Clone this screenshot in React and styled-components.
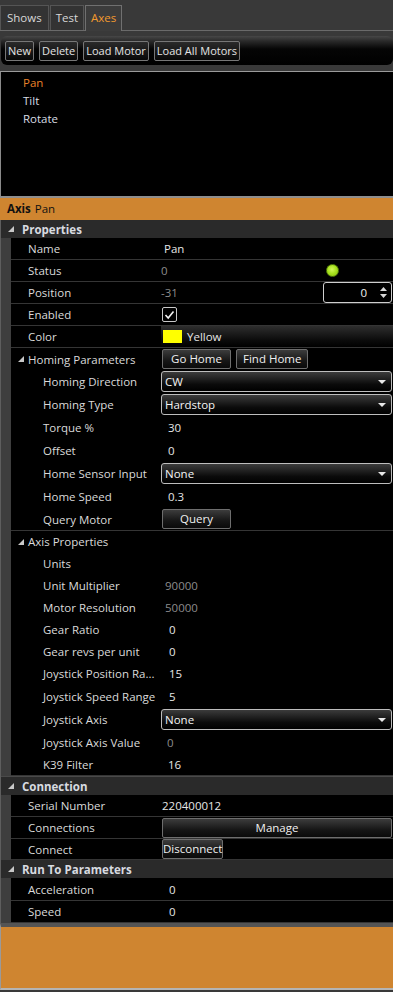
import React from "react";
import styled, { createGlobalStyle } from "styled-components";

const GlobalStyle = createGlobalStyle`
  html, body {
    margin: 0;
    padding: 0;
    background: #3a3a3a;
  }
  body {
    font-family: "Open Sans", "Noto Sans", sans-serif;
    font-size: 11.5px;
    color: #dcdcdc;
  }
`;

const Page = styled.div`
  width: 393px;
  height: 992px;
  display: flex;
  flex-direction: column;
  background: #393939;
  overflow: hidden;
`;

const TabStrip = styled.div`
  display: flex;
  align-items: flex-end;
  height: 31px;
  border-bottom: 1px solid #6a6a6a;
  box-sizing: border-box;
`;

const Tab = styled.div`
  box-sizing: border-box;
  padding: 0 ${(p) => p.$pad || 6}px;
  margin-right: 1px;
  border: 1px solid ${(p) => (p.$active ? "#707070" : "#555")};
  border-bottom: none;
  background: ${(p) => (p.$active ? "#3c3c3c" : "#333")};
  color: ${(p) => (p.$active ? "#f39a2e" : "#d8d8d8")};
  font-size: 11.5px;
  line-height: 24px;
  margin-bottom: ${(p) => (p.$active ? "-1px" : "0")};
  height: ${(p) => (p.$active ? "26px" : "25px")};
`;

const Toolbar = styled.div`
  margin: 5px 0 0 1px;
  height: 29px;
  border-radius: 6px;
  background: linear-gradient(#474747 0px, #2a2a2a 5px, #050505 13px, #000 100%);
  display: flex;
  align-items: center;
  gap: 5px;
  padding: 0 4px;
`;

const ToolButton = styled.button`
  height: 20px;
  padding: 0 2px;
  border: 1px solid #777;
  border-radius: 2px;
  background: linear-gradient(#2a2a2a, #080808);
  color: #e4e4e4;
  font-family: inherit;
  font-size: 11px;
  line-height: 16px;
`;

const AxisList = styled.ul`
  list-style: none;
  margin: 6px 0 0 0;
  padding: 2px 0 0 22px;
  height: 127px;
  box-sizing: border-box;
  background: #000;
  border-top: 1px solid #9a9a9a;
  border-left: 1px solid #8a8a8a;
  border-bottom: 2px solid #8e8e8e;
`;

const AxisItem = styled.li`
  height: 18px;
  line-height: 18px;
  font-size: 11.5px;
  color: ${(p) => (p.$selected ? "#e9822a" : "#d8dde4")};
`;

const AxisHeader = styled.div`
  height: 22px;
  line-height: 22px;
  background: #cf8530;
  color: #111;
  font-size: 11.5px;
  padding-left: 7px;
  b {
    font-weight: 700;
    margin-right: 4px;
  }
`;

const Grid = styled.div`
  background: #3e3e3e;
  border-left: 1px solid #5e5e5e;
`;

const CategoryHeader = styled.div`
  height: 18px;
  background: #2a2a2a;
  display: flex;
  align-items: center;
  padding-left: 7px;
  font-weight: 700;
  font-size: 11.5px;
  color: #d8dbe0;
  border-top: ${(p) => (p.$lined ? "1px solid #4a4a4a" : "none")};
  svg {
    margin-right: 8px;
  }
`;

const Row = styled.div`
  margin-left: 10px;
  height: ${(p) => p.$h || 21}px;
  background: #000;
  border-bottom: ${(p) => (p.$plain ? "none" : "1px solid #353535")};
  display: grid;
  grid-template-columns: 150px 1fr;
  align-items: center;
`;

const Section = styled.div`
  border-bottom: 1px solid #353535;
  background: #000;
  margin-left: 10px;
  & > ${Row} {
    margin-left: 0;
  }
`;

const Name = styled.div`
  padding-left: ${(p) => (p.$level === 2 ? 32 : p.$group ? 7 : 17)}px;
  font-size: 11.5px;
  color: #dadada;
  white-space: nowrap;
  overflow: hidden;
  display: flex;
  align-items: center;
  svg {
    margin-right: 4px;
  }
`;

const Cell = styled.div`
  display: flex;
  align-items: center;
  height: 100%;
  min-width: 0;
`;

const Value = styled.span`
  padding-left: ${(p) => p.$indent ?? 3}px;
  font-size: 11.5px;
  color: ${(p) => (p.$muted ? "#8c8c8c" : "#e6e6e6")};
`;

const StatusDot = styled.span`
  width: 11px;
  height: 11px;
  border-radius: 50%;
  margin-left: auto;
  margin-right: 54px;
  background: radial-gradient(circle at 45% 40%, #d2f75a 0, #a6e01c 50%, #86b814 100%);
  border: 1px solid #56800a;
`;

const Spinner = styled.div`
  margin-left: auto;
  margin-right: 1px;
  width: 69px;
  height: 21px;
  box-sizing: border-box;
  border: 1px solid #cfcfcf;
  border-radius: 3px;
  display: flex;
  align-items: center;
  justify-content: flex-end;
  padding-right: 4px;
  gap: 13px;
  color: #f0f0f0;
  font-size: 11.5px;
`;

const Arrows = styled.span`
  display: flex;
  flex-direction: column;
  gap: 3px;
`;

const CheckBox = styled.span`
  width: 15px;
  height: 15px;
  box-sizing: border-box;
  margin-left: 1px;
  border: 1px solid #c8c8c8;
  border-radius: 2px;
  background: #000;
  display: flex;
  align-items: center;
  justify-content: center;
`;

const ColorCell = styled(Cell)`
  background: linear-gradient(#2e2e2e, #0a0a0a 70%, #000);
`;

const Swatch = styled.span`
  width: 19px;
  height: 13px;
  margin-left: 2px;
  background: ${(p) => p.$color};
`;

const Combo = styled.div`
  flex: 1;
  margin-right: 1px;
  height: 21px;
  box-sizing: border-box;
  border: 1px solid #bdbdbd;
  border-radius: 3px;
  background: linear-gradient(#3b3b3b, #0b0b0b 65%, #000);
  display: flex;
  align-items: center;
  justify-content: space-between;
  padding: 0 5px 0 3px;
  color: #f4f4f4;
  font-size: 11.5px;
`;

const Button = styled.button`
  height: 20px;
  min-width: ${(p) => (p.$wide || p.$tight ? "0" : "69px")};
  flex: ${(p) => (p.$wide ? 1 : "none")};
  margin-left: ${(p) => (p.$first ? "1px" : "5px")};
  margin-right: ${(p) => (p.$wide ? "1px" : "0")};
  padding: 0 ${(p) => (p.$tight ? 0 : 6)}px;
  border: 1px solid #6e6e6e;
  border-radius: 2px;
  background: linear-gradient(#3c3c3c, #161616 60%, #0a0a0a);
  color: #f0f0f0;
  font-family: inherit;
  font-size: 11.5px;
  line-height: 16px;
`;

const BottomPanel = styled.div`
  flex: 1;
  margin-bottom: 2px;
  background: #cf8530;
  border-top: 4px solid #545454;
  border-bottom: 2px solid #b4b4b4;
  border-left: 1px solid #9a9a9a;
`;

const Expander = () => (
  <svg width="6" height="6" viewBox="0 0 6 6">
    <polygon points="6,0 6,6 0,6" fill="#c8c8c8" />
  </svg>
);

const DropArrow = () => (
  <svg width="8" height="4" viewBox="0 0 8 4">
    <polygon points="0,0 8,0 4,4" fill="#e8e8e8" />
  </svg>
);

const Combobox = ({ text }) => (
  <Combo>
    <span>{text}</span>
    <DropArrow />
  </Combo>
);

const Prop = ({ name, level, h, plain, children }) => (
  <Row $h={h} $plain={plain}>
    <Name $level={level}>{name}</Name>
    <Cell>{children}</Cell>
  </Row>
);

const homing = [
  ["Homing Direction", <Combobox text="CW" />],
  ["Homing Type", <Combobox text="Hardstop" />],
  ["Torque %", <Value $indent={7}>30</Value>],
  ["Offset", <Value $indent={7}>0</Value>],
  ["Home Sensor Input", <Combobox text="None" />],
  ["Home Speed", <Value $indent={7}>0.3</Value>],
  ["Query Motor", <Button $first>Query</Button>],
];

const axisProps = [
  ["Units", null, 22],
  ["Unit Multiplier", <Value $indent={4} $muted>90000</Value>, 22],
  ["Motor Resolution", <Value $indent={4} $muted>50000</Value>, 22],
  ["Gear Ratio", <Value $indent={8}>0</Value>, 22],
  ["Gear revs per unit", <Value $indent={8}>0</Value>, 22],
  ["Joystick Position Ra...", <Value $indent={8}>15</Value>, 23],
  ["Joystick Speed Range", <Value $indent={8}>5</Value>, 23],
  ["Joystick Axis", <Combobox text="None" />, 23],
  ["Joystick Axis Value", <Value $indent={6} $muted>0</Value>, 22],
  ["K39 Filter", <Value $indent={7}>16</Value>, 22],
];

export default function App() {
  return (
    <Page>
      <GlobalStyle />
      <TabStrip>
        <Tab>Shows</Tab>
        <Tab $pad={5}>Test</Tab>
        <Tab $active $pad={5}>Axes</Tab>
      </TabStrip>

      <Toolbar>
        <ToolButton>New</ToolButton>
        <ToolButton>Delete</ToolButton>
        <ToolButton>Load Motor</ToolButton>
        <ToolButton>Load All Motors</ToolButton>
      </Toolbar>

      <AxisList>
        <AxisItem $selected>Pan</AxisItem>
        <AxisItem>Tilt</AxisItem>
        <AxisItem>Rotate</AxisItem>
      </AxisList>

      <AxisHeader>
        <b>Axis</b>Pan
      </AxisHeader>

      <Grid>
        <CategoryHeader>
          <Expander />
          Properties
        </CategoryHeader>
        <Prop name="Name">
          <Value>Pan</Value>
        </Prop>
        <Prop name="Status">
          <Value $indent={0} $muted>0</Value>
          <StatusDot />
        </Prop>
        <Prop name="Position">
          <Value $indent={0} $muted>-31</Value>
          <Spinner>
            0
            <Arrows>
              <svg width="7" height="4" viewBox="0 0 7 4">
                <polygon points="0,4 7,4 3.5,0" fill="#d8d8d8" />
              </svg>
              <svg width="7" height="4" viewBox="0 0 7 4">
                <polygon points="0,0 7,0 3.5,4" fill="#d8d8d8" />
              </svg>
            </Arrows>
          </Spinner>
        </Prop>
        <Prop name="Enabled">
          <CheckBox>
            <svg width="11" height="10" viewBox="0 0 11 10">
              <polyline points="1.5,5 4.2,8 9.5,1.5" fill="none" stroke="#f2f2f2" strokeWidth="1.6" />
            </svg>
          </CheckBox>
        </Prop>
        <Row>
          <Name>Color</Name>
          <ColorCell>
            <Swatch $color="#ffff00" />
            <Value $indent={5}>Yellow</Value>
          </ColorCell>
        </Row>

        <Section>
          <Row $plain $h={22}>
            <Name $group>
              <Expander />
              Homing Parameters
            </Name>
            <Cell>
              <Button $first>Go Home</Button>
              <Button>Find Home</Button>
            </Cell>
          </Row>
          {homing.map(([n, v], i) => (
            <Prop key={n} name={n} level={2} h={i === homing.length - 1 ? 22 : 23} plain>
              {v}
            </Prop>
          ))}
        </Section>

        <Section>
          <Row $plain $h={21}>
            <Name $group>
              <Expander />
              Axis Properties
            </Name>
            <Cell />
          </Row>
          {axisProps.map(([n, v, h]) => (
            <Prop key={n} name={n} level={2} h={h} plain>
              {v}
            </Prop>
          ))}
        </Section>

        <CategoryHeader $lined>
          <Expander />
          Connection
        </CategoryHeader>
        <Prop name="Serial Number">
          <Value $indent={1}>220400012</Value>
        </Prop>
        <Prop name="Connections">
          <Button $first $wide>Manage</Button>
        </Prop>
        <Prop name="Connect" h={20}>
          <Button $first $tight>Disconnect</Button>
        </Prop>

        <CategoryHeader>
          <Expander />
          Run To Parameters
        </CategoryHeader>
        <Prop name="Acceleration" h={22}>
          <Value $indent={8}>0</Value>
        </Prop>
        <Prop name="Speed" h={21}>
          <Value $indent={8}>0</Value>
        </Prop>
      </Grid>

      <BottomPanel />
    </Page>
  );
}
